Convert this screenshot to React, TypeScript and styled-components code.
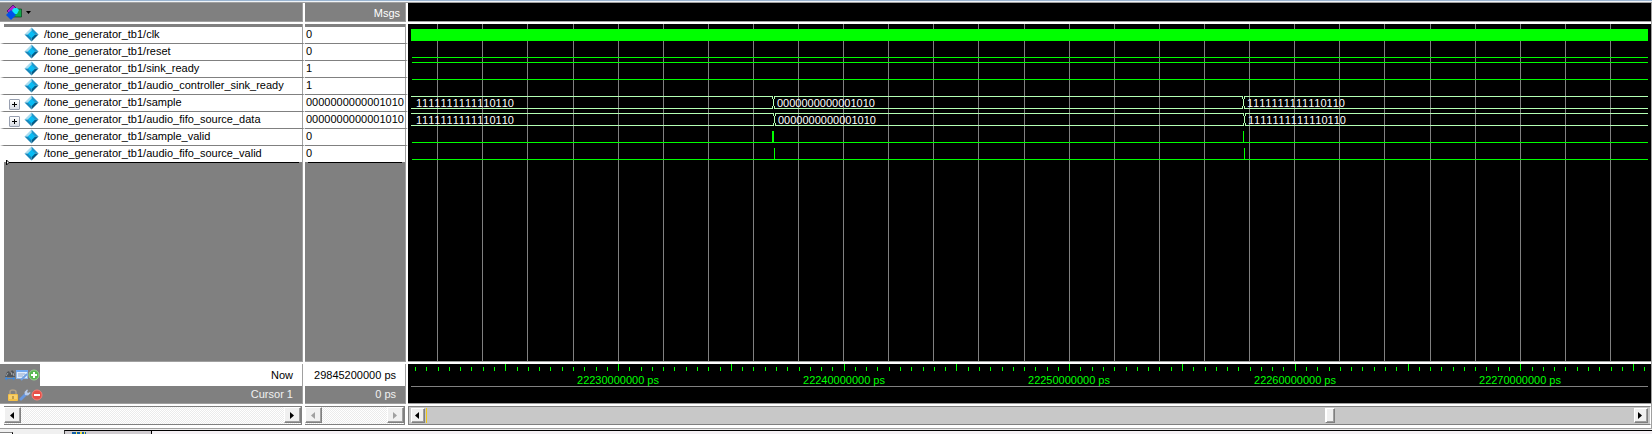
import React from "react";
import styled, { createGlobalStyle } from "styled-components";

const Global = createGlobalStyle`
  * { box-sizing: border-box; }
  html, body, #root { height: 100%; }
  body {
    margin: 0;
    overflow: hidden;
    background: #f0f0f0;
    color: #000;
    font: 11px/16px "Liberation Sans", Arial, sans-serif;
    font-kerning: none;
  }
`;

const Page = styled.div`
  height: 100%;
  display: grid;
  grid-template-columns: 408px minmax(0, 1fr) 1px;
  grid-template-rows: 3px minmax(0, 1fr) 22px 6px;
  background: #fff;
`;

const TopEdge = styled.div`
  grid-column: 1 / -1;
  background: #f0f4f8;
  border-top: 1px solid #99b4d1;
  border-bottom: 1px solid #a0a0a0;
`;

const RightEdge = styled.div`
  grid-column: 3;
  background: #a0a0a0;
`;

/* signal table */

const Table = styled.table`
  width: 408px;
  height: 100%;
  table-layout: fixed;
  border-collapse: separate;
  border-spacing: 0;
  background: #808080;

  th, td {
    padding: 0;
    font-weight: normal;
    white-space: nowrap;
    vertical-align: top;
  }
  th:first-child, td:first-child {
    width: 305px;
    border-right: 2px solid #fff;
    box-shadow: inset -1px 0 #a0a0a0;
  }
  th:last-child, td:last-child {
    border-right: 2px solid #fff;
    box-shadow: inset -1px 0 #a0a0a0;
  }
`;

const HeadRow = styled.tr`
  height: 21px;
  color: #fff;
  text-align: right;
  th { border-bottom: 2px solid #fff; }
  th, th:first-child, th:last-child { box-shadow: inset -1px -1px #a0a0a0; }
`;

const Gap = styled.tr`
  height: 3px;
  line-height: 0;
  td:first-child { border-left: 4px solid #fff; }
`;

const SignalRow = styled.tr`
  height: 17px;
  td { border-bottom: 1px solid #808080; }
  td:first-child { background: #fff; border-left: 4px solid #fff; }
  td:last-child { background: #fff; }
  &:nth-last-child(2) { height: 16px; }
  &:nth-last-child(2) td { border-bottom: 0; }
`;

const FillRow = styled.tr`
  td:first-child { border-left: 4px solid #fff; }
  td { border-bottom: 2px solid #fff; }
  td, td:first-child, td:last-child { box-shadow: inset -1px -1px #a0a0a0; }
`;

const DropLine = styled.div`
  position: relative;
  margin: 0 4px 0 3px;
  border-top: 1px solid #000;
  svg { position: absolute; left: -1px; top: -4px; }
`;

const NowRow = styled.tr`
  height: 22px;
  text-align: right;
  td { background: #fff; }
`;

const CursorRow = styled.tr`
  height: 20px;
  color: #f0f0f0;
  text-align: right;
  td { border-bottom: 2px solid #fff; }
  td, td:first-child, td:last-child { box-shadow: inset -1px -1px #a0a0a0; }
`;

const HeadBar = styled.div`
  display: flex;
  align-items: center;
  height: 19px;
  padding-left: 5px;
`;

const PickButton = styled.button`
  display: flex;
  align-items: center;
  gap: 3px;
  padding: 0;
  border: 0;
  background: none;
`;

const HeadText = styled.div`
  padding: 2px 6px 0 0;
`;

const NameCell = styled.div`
  display: grid;
  grid-template-columns: 14px 15px auto;
  align-items: start;
  column-gap: 1px;
  height: 16px;
  padding-left: 5px;
  line-height: 14px;
  svg { display: block; }
`;

const Name = styled.span`
  padding-left: 4px;
`;

const Value = styled.div`
  height: 16px;
  padding-left: 1px;
  line-height: 14px;
`;

const Expand = styled.button`
  display: block;
  width: 11px;
  height: 11px;
  margin-top: 4px;
  padding: 0;
  border: 1px solid #98a0b0;
  border-radius: 1px;
  background: linear-gradient(#fff, #d8dce4);
`;

const FooterCell = styled.div<{ $light?: boolean }>`
  display: flex;
  justify-content: space-between;
  height: ${(p) => (p.$light ? 22 : 17)}px;
  padding-right: 10px;
  line-height: ${(p) => (p.$light ? 22 : 17)}px;
`;

const Tools = styled.div<{ $indent?: boolean }>`
  display: flex;
  align-items: center;
  width: ${(p) => (p.$indent ? 48 : 40)}px;
  padding-left: ${(p) => (p.$indent ? 7 : 4)}px;
  background: #808080;
`;

const ToolButton = styled.button`
  width: 12px;
  height: 12px;
  padding: 0;
  border: 0;
  background: none;
  svg { display: block; }
`;

const FooterValue = styled(FooterCell)`
  justify-content: flex-end;
`;

/* wave pane */

const WavePane = styled.section`
  display: grid;
  grid-template-rows: 18px minmax(0, 1fr) 39px;
  row-gap: 3px;
  padding-bottom: 3px;
  min-width: 0;
  background: #fff;
`;

const Black = styled.div`
  min-height: 0;
  padding: 0 3px;
  background: #000;
  box-shadow: 0 1px #a0a0a0;
`;

const Drawing = styled.svg`
  display: block;
  width: 100%;
  height: 100%;
  shape-rendering: crispEdges;
`;

/* scroll bars */

const Bars = styled.div`
  display: grid;
  grid-template-columns: 298px 100px;
  column-gap: 3px;
  padding: 0 3px 0 4px;
`;

const Bar = styled.div<{ $flat?: boolean }>`
  display: flex;
  height: 19px;
  padding: ${(p) => (p.$flat ? "1px 2px" : "0 0 1px")};
  border-top: 1px solid #808080;
  border-bottom: 1px solid #808080;
  border-right: 1px solid ${(p) => (p.$flat ? "#fff" : "#808080")};
  border-left: ${(p) => (p.$flat ? "1px solid #808080" : "0")};
  background: ${(p) =>
    p.$flat
      ? "#c8c8c8"
      : "repeating-conic-gradient(#fff 0 25%, #ebebeb 0 50%) 0 0 / 2px 2px"};
`;

const ArrowButton = styled.button<{ $wide?: boolean }>`
  display: flex;
  align-items: center;
  justify-content: center;
  flex: none;
  width: ${(p) => (p.$wide ? 17 : 14)}px;
  padding: 0 2px 0 0;
  border: 1px solid;
  border-color: #fff #808080 #808080 #fff;
  background: #f0f0f0;
  box-shadow: inset -1px -1px #a0a0a0;
  color: #000;
  &:disabled { color: #a0a0a0; }
`;

const Track = styled.div`
  flex: 1;
  display: flex;
`;

const CursorMark = styled.div`
  width: 1px;
  margin-left: 1px;
  background: #f0c818;
`;

const Before = styled.div`
  flex: 3;
`;

const After = styled.div`
  flex: 1;
`;

const Thumb = styled.div`
  width: 10px;
  border: 1px solid;
  border-color: #fff #808080 #808080 #fff;
  background: #f0f0f0;
  box-shadow: inset 1px 0 #fff, inset -1px -1px #a0a0a0;
`;

/* strip of document tabs */

const TabStrip = styled.div`
  grid-column: 1 / -1;
  display: grid;
  grid-template-columns: 64px 88px 1fr;
  border-top: 1px solid #a0a0a0;
  background: #f0f0f0;
`;

const FirstTab = styled.div`
  width: 13px;
  height: 2px;
  margin-top: 3px;
  border-top: 1px solid #808080;
  border-right: 1px solid #000;
  background: #fff;
`;

const Tab = styled.div<{ $active?: boolean }>`
  margin-top: 1px;
  padding: 1px 0 0 7px;
  border-top: 1px solid #000;
  border-left: ${(p) => (p.$active ? "1px solid #404040" : "0")};
  border-right: ${(p) => (p.$active ? "1px solid #000" : "0")};
  background: ${(p) => (p.$active ? "#d0ccd0" : "#f4f0f4")};
  svg { display: block; }
`;

const signals = [
  { name: "clk", value: "0" },
  { name: "reset", value: "0" },
  { name: "sink_ready", value: "1" },
  { name: "audio_controller_sink_ready", value: "1" },
  { name: "sample", value: "0000000000001010", bus: true },
  { name: "audio_fifo_source_data", value: "0000000000001010", bus: true },
  { name: "sample_valid", value: "0" },
  { name: "audio_fifo_source_valid", value: "0" },
];

const Diamond = () => (
  <svg width="15" height="15" viewBox="0 0 16 16" aria-hidden="true">
    <path d="M8 0.5L0.5 8H5L8 5Z" fill="#a8dcf0" />
    <path d="M8 0.5L15.5 8H11L8 5Z" fill="#2098cc" />
    <path d="M0.5 8L8 15.5V11L5 8Z" fill="#1888bc" />
    <path d="M15.5 8L8 15.5V11L11 8Z" fill="#045c88" />
    <path d="M8 4L12 8L8 12L4 8Z" fill="#08bcf4" />
  </svg>
);

const Plus = () => (
  <svg width="9" height="9" viewBox="0 0 9 9" aria-hidden="true">
    <path d="M2 4.5H7M4.5 2V7" stroke="#000" />
  </svg>
);

const Shapes = () => (
  <svg width="18" height="17" viewBox="0 0 18 17" aria-hidden="true">
    <path d="M2 7L8 1L11 4L7 7L4 9Z" fill="#b020d0" stroke="#400060" strokeWidth="0.7" />
    <path d="M10 5H16.5V13H8Z" fill="#10a848" stroke="#084020" strokeWidth="0.7" />
    <path d="M9 4H12L14 6L12 10H8L7 6Z" fill="#10e8f8" />
    <path d="M6 6L11 11L6 16L1 11Z" fill="#0050e8" />
  </svg>
);

const Down = () => (
  <svg width="5" height="3" viewBox="0 0 5 3" aria-hidden="true">
    <path d="M0 0H5L2.5 3Z" fill="#000" />
  </svg>
);

const Arrow = ({ right }: { right?: boolean }) => (
  <svg width="4" height="7" viewBox="0 0 4 7" aria-hidden="true">
    <path d={right ? "M0 0V7L4 3.5Z" : "M4 0V7L0 3.5Z"} fill="currentColor" />
  </svg>
);

const Binoculars = () => (
  <svg width="12" height="12" viewBox="0 0 12 12" aria-hidden="true">
    <path d="M1 8L3 3L5 2L6 4L8 1L10 3L11 8Z" fill="#505458" />
    <path d="M2 7L4 4M7 3L8 6M9 4L10 7" stroke="#a0a4a8" />
    <path d="M1 9.5H11M1 9.5L3 8M1 9.5L3 11M11 9.5L9 8M11 9.5L9 11" stroke="#4088d8" fill="none" />
  </svg>
);

const Wrench = () => (
  <svg width="12" height="12" viewBox="0 0 12 12" aria-hidden="true">
    <path d="M2 10L7 5" stroke="#6898e0" strokeWidth="3" strokeLinecap="round" />
    <path d="M6 6L5.5 3L8 0.5L9 1L8 3L9 4L11 3L11.5 4L9 6.5Z" fill="#b8ccec" />
  </svg>
);

const Form = () => (
  <svg width="12" height="12" viewBox="0 0 12 12" aria-hidden="true">
    <rect x="0.5" y="1.5" width="11" height="8" fill="#e0ecfc" stroke="#90b8e8" />
    <path d="M0 2H12" stroke="#70a8f0" strokeWidth="2" />
    <path d="M2 5H9M2 7H7" stroke="#90a8c8" />
    <path d="M5 11L9 7L11 5" stroke="#70a0e0" strokeWidth="2" fill="none" />
  </svg>
);

const Round = ({ add }: { add?: boolean }) => (
  <svg width="12" height="12" viewBox="0 0 12 12" aria-hidden="true">
    <circle cx="6" cy="6" r="5" fill={add ? "#58b850" : "#e85048"} stroke={add ? "#98d090" : "#f08078"} />
    <path d={add ? "M3 6H9M6 3V9" : "M3 6H9"} stroke="#fff" strokeWidth="2" />
  </svg>
);

const Lock = () => (
  <svg width="12" height="12" viewBox="0 0 12 12" aria-hidden="true">
    <path d="M3 6V3Q3 1 5.500 1Q9 1 9 3V5" stroke="#b0a088" strokeWidth="1.500" fill="none" />
    <rect x="1" y="5" width="10" height="7" rx="1" fill="#f4c048" />
    <path d="M2 7H10M2 9H10" stroke="#fce090" />
    <path d="M6 7V10" stroke="#906820" />
  </svg>
);

const GREEN = "#00ff00";
const PALE = "#b4ffb4";
const grid = Array.from({ length: 60 }, (_, i) => Math.floor(26.68 + i * 45.11));
const ticks = Array.from({ length: 240 }, (_, i) => ({
  x: Math.floor(4.6 + i * 11.2775),
  major: i % 10 === 8,
}));
const times = [22230, 22240, 22250, 22260, 22270].map((t, i) => ({
  x: Math.round(207 + i * 225.6),
  text: `${t}000000 ps`,
}));

const Level = ({ y }: { y: number }) => (
  <rect x="1" y={y} width="100%" height="1" fill={GREEN} />
);

const Pulse = ({ x, y, w = 1 }: { x: number; y: number; w?: number }) => (
  <rect x={x} y={y} width={w} height="12" fill={GREEN} />
);

/* a bus whose value changes at the two given positions */
const Bus = ({ y, a, b }: { y: number; a: number; b: number }) => (
  <g fill={PALE}>
    {[y, y + 12].map((row) => (
      <rect key={row} x="0" y={row} width="100%" height="1" />
    ))}
    {[a, b].map((x) => (
      <g key={x}>
        <rect x={x} y={y} width="1" height="13" fill="#000" />
        <rect x={x - 1} y={y} width="1" height="3" />
        <rect x={x + 1} y={y} width="1" height="3" />
        <rect x={x} y={y + 3} width="1" height="7" />
        <rect x={x - 1} y={y + 10} width="1" height="3" />
        <rect x={x + 1} y={y + 10} width="1" height="3" />
      </g>
    ))}
    <g fill="#fff">
      <text x="5" y={y + 11}>1111111111110110</text>
      <text x={a + 4} y={y + 11}>0000000000001010</text>
      <text x={b + 4} y={y + 11}>1111111111110110</text>
    </g>
  </g>
);

export default function App() {
  return (
    <Page>
      <Global />
      <TopEdge />
      <Table>
        <thead>
          <HeadRow>
            <th>
              <HeadBar>
                <PickButton aria-label="Choose signals">
                  <Shapes />
                  <Down />
                </PickButton>
              </HeadBar>
            </th>
            <th>
              <HeadText>Msgs</HeadText>
            </th>
          </HeadRow>
        </thead>
        <tbody>
          <Gap>
            <td />
            <td />
          </Gap>
          {signals.map((s) => (
            <SignalRow key={s.name}>
              <td>
                <NameCell>
                  {s.bus ? (
                    <Expand aria-label={`Expand ${s.name}`}>
                      <Plus />
                    </Expand>
                  ) : (
                    <span />
                  )}
                  <Diamond />
                  <Name>/tone_generator_tb1/{s.name}</Name>
                </NameCell>
              </td>
              <td>
                <Value>{s.value}</Value>
              </td>
            </SignalRow>
          ))}
          <FillRow>
            <td>
              <DropLine>
                <svg width="4" height="7" viewBox="0 0 4 7" aria-hidden="true">
                  <path d="M0.5 1V6L3 3.5Z" fill="#fff" stroke="#000" />
                </svg>
              </DropLine>
            </td>
            <td>
              <DropLine />
            </td>
          </FillRow>
        </tbody>
        <tfoot>
          <NowRow>
            <td>
              <FooterCell $light>
                <Tools>
                  <ToolButton aria-label="Find"><Binoculars /></ToolButton>
                  <ToolButton aria-label="Edit grid"><Form /></ToolButton>
                  <ToolButton aria-label="Add cursor"><Round add /></ToolButton>
                </Tools>
                Now
              </FooterCell>
            </td>
            <td>
              <FooterValue $light>29845200000 ps</FooterValue>
            </td>
          </NowRow>
          <CursorRow>
            <td>
              <FooterCell>
                <Tools $indent>
                  <ToolButton aria-label="Lock cursor"><Lock /></ToolButton>
                  <ToolButton aria-label="Edit cursor"><Wrench /></ToolButton>
                  <ToolButton aria-label="Remove cursor"><Round /></ToolButton>
                </Tools>
                Cursor 1
              </FooterCell>
            </td>
            <td>
              <FooterValue>0 ps</FooterValue>
            </td>
          </CursorRow>
        </tfoot>
      </Table>

      <WavePane>
        <Black />
        <Black>
          <Drawing>
            {grid.map((x) => (
              <rect key={x} x={x} y="0" width="1" height="100%" fill="#808080" />
            ))}
            <rect x="0" y="5" width="100%" height="12" fill={GREEN} />
            <Level y={33} />
            <Level y={38} />
            <Level y={55} />
            <Bus y={72} a={362} b={832} />
            <Bus y={89} a={363} b={833} />
            <Level y={118} />
            <Pulse x={361} y={107} w={2} />
            <Pulse x={832} y={107} />
            <Level y={135} />
            <Pulse x={363} y={124} />
            <Pulse x={833} y={124} />
          </Drawing>
        </Black>
        <Black>
          <Drawing>
            {ticks.map((t) => (
              <rect
                key={t.x}
                x={t.x}
                y={t.major ? 0 : 3}
                width="1"
                height={t.major ? 7 : 4}
                fill={GREEN}
              />
            ))}
            {times.map((t) => (
              <text key={t.x} x={t.x} y="20" textAnchor="middle" fill={GREEN}>
                {t.text}
              </text>
            ))}
            <rect x="0" y="22" width="100%" height="1" fill="#808080" />
          </Drawing>
        </Black>
      </WavePane>
      <RightEdge />

      <Bars>
        <Bar>
          <ArrowButton $wide aria-label="Scroll names left"><Arrow /></ArrowButton>
          <Track />
          <ArrowButton $wide aria-label="Scroll names right"><Arrow right /></ArrowButton>
        </Bar>
        <Bar>
          <ArrowButton $wide disabled aria-label="Scroll values left"><Arrow /></ArrowButton>
          <Track />
          <ArrowButton $wide disabled aria-label="Scroll values right"><Arrow right /></ArrowButton>
        </Bar>
      </Bars>
      <Bar $flat>
        <ArrowButton aria-label="Scroll waves left"><Arrow /></ArrowButton>
        <Track>
          <CursorMark />
          <Before />
          <Thumb />
          <After />
        </Track>
        <ArrowButton aria-label="Scroll waves right"><Arrow right /></ArrowButton>
      </Bar>
      <RightEdge />

      <TabStrip>
        <FirstTab />
        <Tab $active>
          <svg width="14" height="2" viewBox="0 0 14 2" aria-hidden="true">
            <path d="M0 1H14" stroke="#1060a8" strokeWidth="2" />
            <path d="M4 1H5M8 1H10M12 1H13" stroke="#f0e040" strokeWidth="2" />
          </svg>
        </Tab>
        <Tab />
      </TabStrip>
    </Page>
  );
}
